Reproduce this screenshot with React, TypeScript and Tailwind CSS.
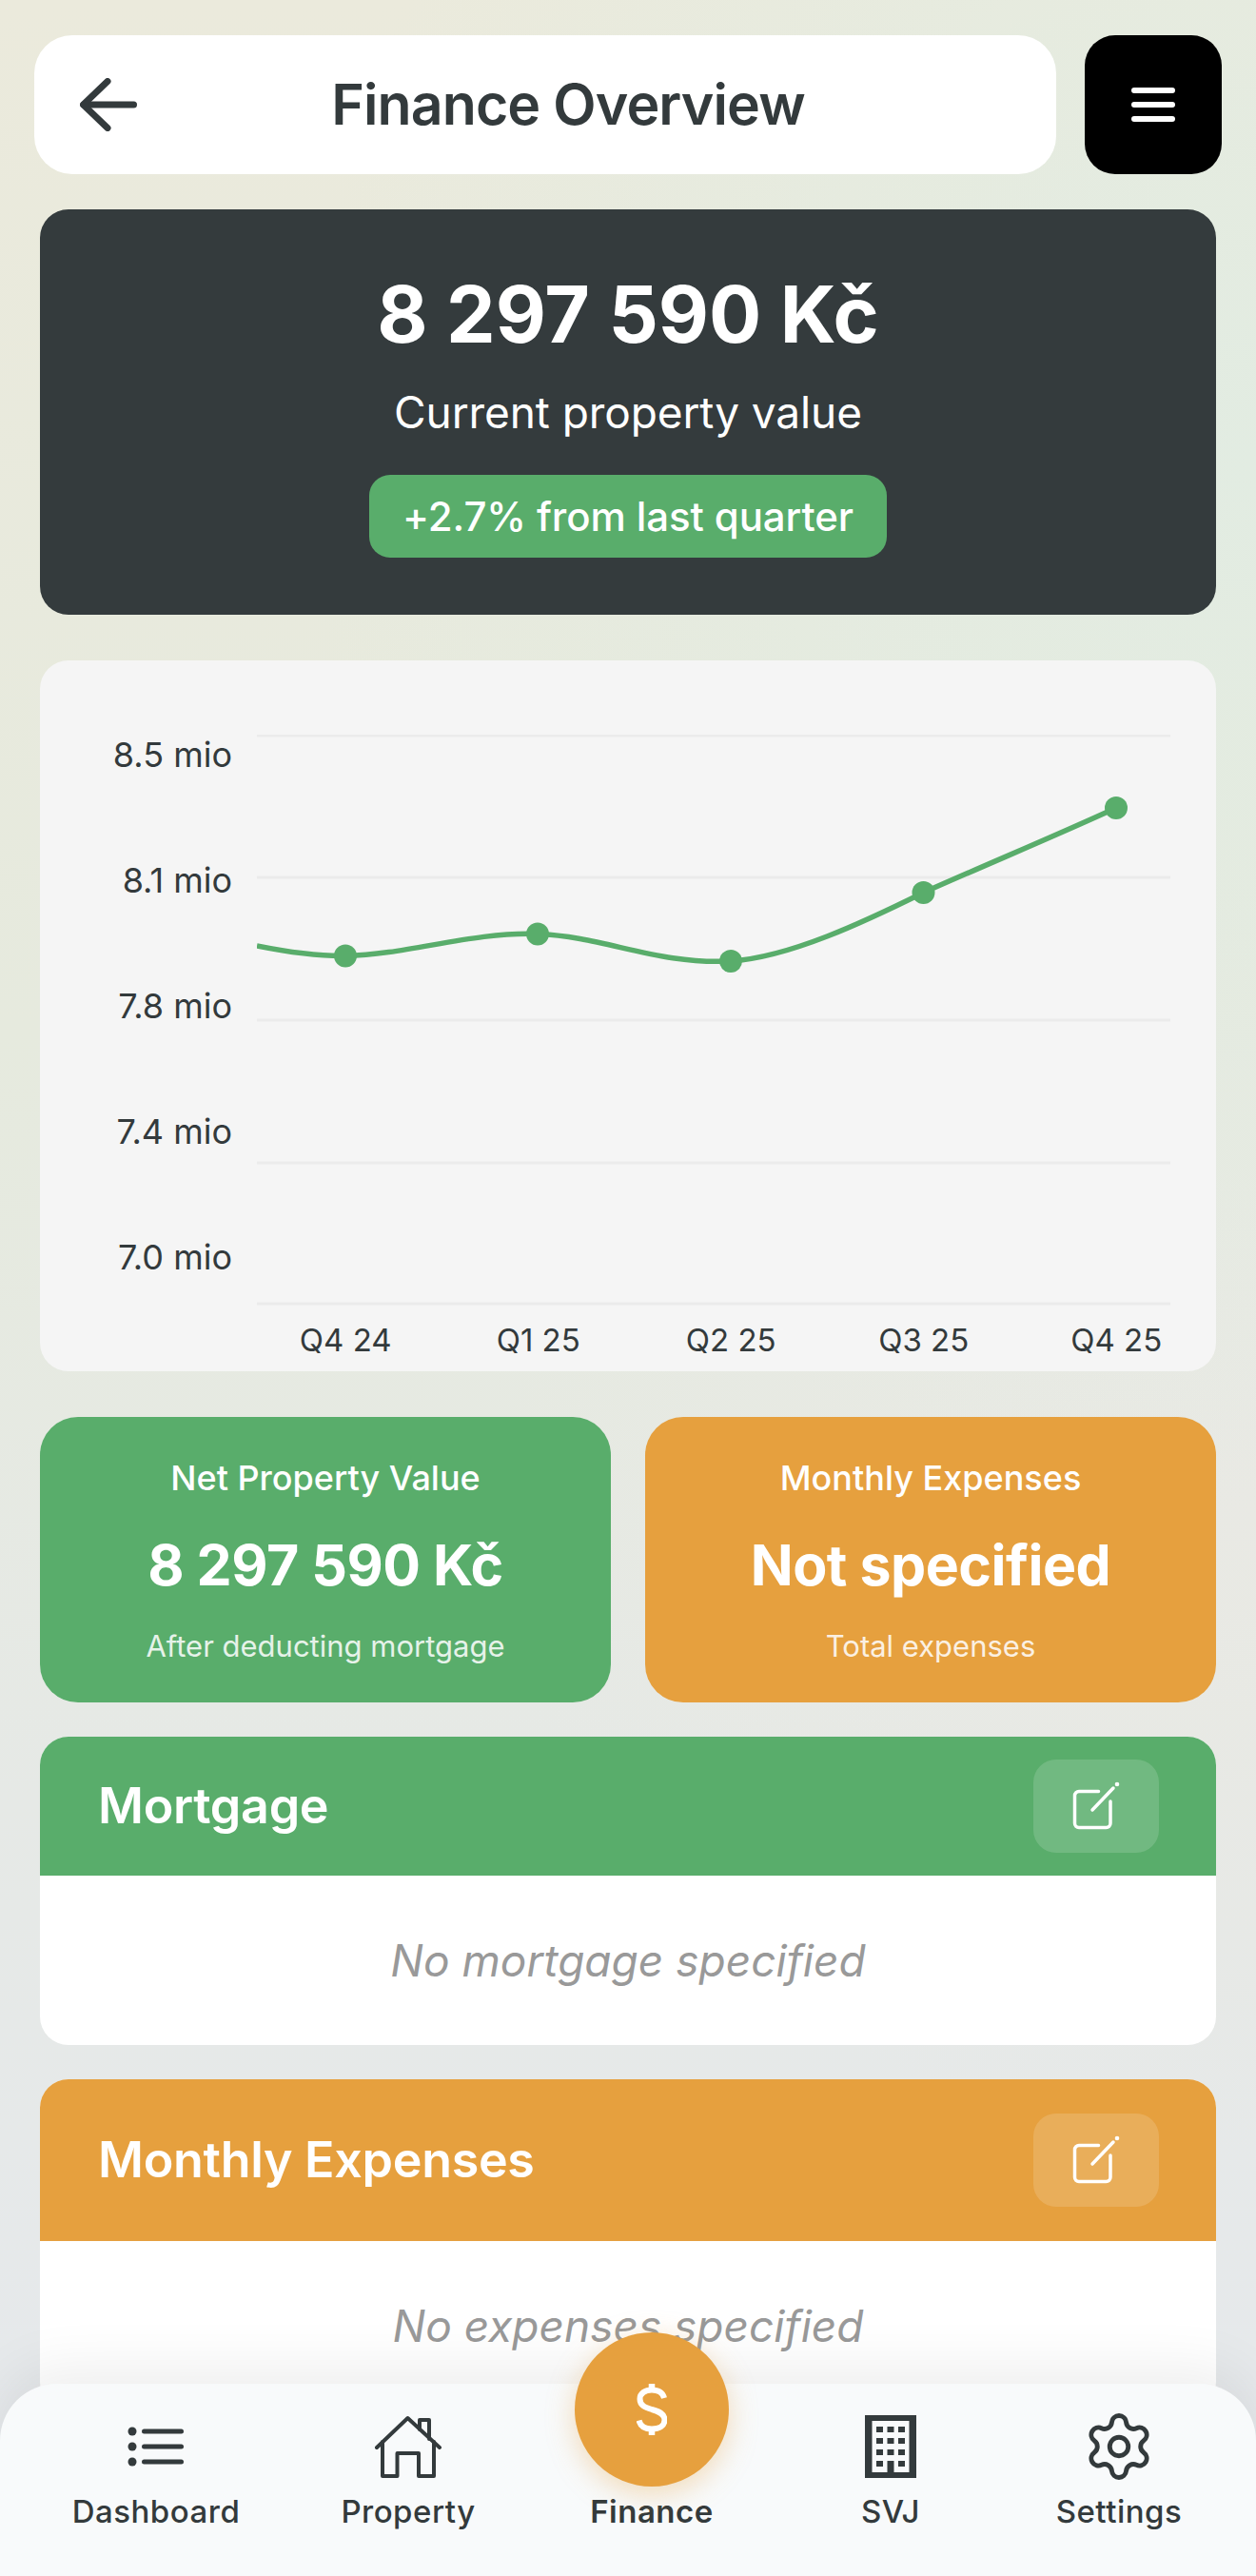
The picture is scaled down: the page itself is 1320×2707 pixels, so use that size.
import type { ReactNode } from 'react';
import { Settings } from 'lucide-react';

const yLabels = ['8.5 mio', '8.1 mio', '7.8 mio', '7.4 mio', '7.0 mio'];
const xLabels = ['Q4 24', 'Q1 25', 'Q2 25', 'Q3 25', 'Q4 25'];
const gridLines = [1, 150, 300, 450, 598];
const points = [
  [93, 232.5],
  [295, 209.5],
  [498, 238],
  [700.5, 166],
  [903, 77],
];

function ListIcon() {
  return (
    <svg width="60" height="42" viewBox="0 0 60 42" fill="#333a3c">
      <ellipse cx="5" cy="5" rx="4.5" ry="4.5" />
      <ellipse cx="5" cy="21" rx="4.5" ry="4.5" />
      <ellipse cx="5" cy="37" rx="4.5" ry="4.5" />
      <rect x="15" y="2.5" width="44" height="5" rx="2.5" />
      <rect x="15" y="18.5" width="44" height="5" rx="2.5" />
      <rect x="15" y="34.5" width="44" height="5" rx="2.5" />
    </svg>
  );
}

function HouseIcon() {
  return (
    <svg width="72" height="66" viewBox="0 0 72 66" fill="none" stroke="#333a3c" strokeWidth="4" strokeLinecap="round" strokeLinejoin="round">
      <path d="M3 34 35.5 3 69 34" />
      <path d="M9 28V64H24.5V40H47V64H63V28" />
      <path d="M48 15V5H58V25" />
    </svg>
  );
}

function BuildingIcon() {
  return (
    <svg width="54" height="66" viewBox="0 0 54 66" fill="#333a3c">
      <path fillRule="evenodd" d="M0 0H54V66H0ZM7.5 6V60H46.5V6Z" />
      {[12, 24, 36].map((y) =>
        [12, 23.5, 35].map((x) => <rect key={`${x}-${y}`} x={x} y={y} width="7" height="6" />),
      )}
      <rect x="12" y="48" width="7" height="6" />
      <rect x="23.5" y="48" width="7" height="12" />
      <rect x="35" y="48" width="7" height="6" />
    </svg>
  );
}

function DollarIcon() {
  return (
    <svg width="32" height="54" viewBox="0 0 32 54" fill="none" stroke="#fff" strokeWidth="6">
      <path d="M29 15C27.500 9 22.500 6.500 16 6.500 9 6.500 3.500 10 3.500 16 3.500 23 9.500 25 16 27 23.500 29 29.500 31.500 29.500 38 29.500 44 24 47.500 16 47.500 9 47.500 4 44.500 2.500 38.500" />
      <path d="M16 0V7M16 47V54" strokeWidth="6.500" />
    </svg>
  );
}

function EditIcon() {
  return (
    <svg width="50" height="52" viewBox="0 0 50 52" fill="none" stroke="#fff" strokeWidth="3.500" strokeLinecap="round">
      <path d="M27.500 10.500H7A4.500 4.500 0 0 0 2.500 15V44A4.500 4.500 0 0 0 7 48.500H35.500A4.500 4.500 0 0 0 40 44V21" />
      <path d="M21 30 43 7" />
      <circle cx="47" cy="3" r="2.300" fill="#fff" stroke="none" />
    </svg>
  );
}

function StatCard({ title, value, note, color }: { title: string; value: string; note: string; color: string }) {
  return (
    <div className={`flex h-[300px] flex-col items-center rounded-[40px] pt-[44px] text-white ${color}`}>
      <div className="text-[36px] leading-[40px] font-medium">{title}</div>
      <div className="mt-[37px] text-[59px] leading-[70px] font-bold tracking-[-0.5px]">{value}</div>
      <div className="mt-[32px] text-[31px] leading-[36px] opacity-85">{note}</div>
    </div>
  );
}

function Section({ title, empty, color, chip, headerHeight, bodyClass, children }: {
  title: string;
  empty: string;
  color: string;
  chip: string;
  headerHeight: string;
  bodyClass: string;
  children: ReactNode;
}) {
  return (
    <section className="overflow-hidden rounded-[30px] bg-white">
      <div className={`flex items-center justify-between pr-[60px] pl-[61px] ${color} ${headerHeight}`}>
        <h2 className="text-[52px] leading-[62px] font-semibold tracking-[-0.3px] text-white">{title}</h2>
        <button className={`flex h-[98px] w-[132px] items-center justify-center rounded-[24px] ${chip}`}>{children}</button>
      </div>
      <div className={`text-center text-[46px] text-[#999999] italic ${bodyClass}`}>{empty}</div>
    </section>
  );
}

const navItems = [
  { label: 'Dashboard', icon: <ListIcon /> },
  { label: 'Property', icon: <HouseIcon /> },
  { label: 'Finance', icon: <div className="h-[66px]" />, active: true },
  { label: 'SVJ', icon: <BuildingIcon /> },
  { label: 'Settings', icon: <Settings size={78} strokeWidth={1.5} color="#333a3c" className="-my-[6px]" /> },
];

export default function App() {
  return (
    <div className="relative h-[2707px] w-[1320px] overflow-hidden bg-[radial-gradient(1000px_1100px_at_100%_18%,#e2ece2_0%,transparent_100%),radial-gradient(800px_700px_at_100%_58%,#e9e9e4_0%,transparent_100%),linear-gradient(180deg,#ebeadc_0%,#e6eade_40%,#e6e9e6_70%,#e6e9ed_100%)] font-[Inter,sans-serif] text-[#333a3c]">
      <header className="flex gap-[30px] pt-[37px] pr-[36px] pl-[36px]">
        <div className="flex h-[146px] w-[1074px] items-center rounded-[40px] bg-white pl-[48px]">
          <svg width="60" height="56" viewBox="0 0 60 56" fill="none" stroke="#333a3c" strokeWidth="7" strokeLinecap="round" strokeLinejoin="round">
            <path d="M56.500 28H4" />
            <path d="M29 3.500 3.500 28 29 52.500" />
          </svg>
          <h1 className="flex-1 pr-[60px] text-center text-[59px] font-semibold tracking-[-0.9px]">Finance Overview</h1>
        </div>
        <button className="flex h-[146px] w-[144px] flex-col items-center justify-center gap-[9px] rounded-[32px] bg-black">
          <span className="h-[6px] w-[46px] rounded-full bg-white" />
          <span className="h-[6px] w-[46px] rounded-full bg-white" />
          <span className="h-[6px] w-[46px] rounded-full bg-white" />
        </button>
      </header>

      <main className="px-[42px]">
        <section className="mt-[37px] flex h-[426px] flex-col items-center rounded-[30px] bg-[#343b3d] pt-[61px] text-white">
          <div className="text-[82px] leading-[100px] font-bold">8 297 590 Kč</div>
          <div className="mt-[24px] text-[46px] leading-[56px] tracking-[-0.1px]">Current property value</div>
          <div className="mt-[38px] flex h-[87px] w-[544px] items-center justify-center rounded-[22px] bg-[#59ad6b] text-[42px] font-medium tracking-[-0.1px]">
            +2.7% from last quarter
          </div>
        </section>

        <section className="mt-[48px] h-[747px] rounded-[30px] bg-[#f5f5f5]">
          <div className="flex h-[694px] gap-[26px]">
            <div className="w-[202px] pt-[33px]">
              {yLabels.map((label) => (
                <div key={label} className="flex h-[132px] items-center justify-end text-[36px]">
                  {label}
                </div>
              ))}
            </div>
            <svg width="960" height="600" viewBox="0 0 960 600" fill="none" className="mt-[78px]">
              {gridLines.map((y) => (
                <line key={y} x1="0" x2="960" y1={y} y2={y} stroke="#ebebeb" strokeWidth="3" />
              ))}
              <path
                d="M0 222C35 229 65 233 93 232.500 160 231 225 207 295 209.500 365 212 420 242 498 238 560 234 640 196 700.500 166 770 135 840 106 903 77"
                stroke="#59ad6b"
                strokeWidth="5.500"
              />
              {points.map(([x, y]) => (
                <circle key={x} cx={x} cy={y} r="12" fill="#59ad6b" />
              ))}
            </svg>
          </div>
          <div className="mt-[2px] ml-[220px] flex h-[38px] items-center">
            {xLabels.map((label) => (
              <div key={label} className="w-[202.500px] text-center text-[33px]">
                {label}
              </div>
            ))}
          </div>
        </section>

        <div className="mt-[48px] grid grid-cols-2 gap-[36px]">
          <StatCard title="Net Property Value" value="8 297 590 Kč" note="After deducting mortgage" color="bg-[#59ad6b]" />
          <StatCard title="Monthly Expenses" value="Not specified" note="Total expenses" color="bg-[#e6a03e]" />
        </div>

        <div className="mt-[36px]">
          <Section title="Mortgage" empty="No mortgage specified" color="bg-[#59ad6b]" chip="bg-white/15" headerHeight="h-[146px]" bodyClass="py-[61px] leading-[56px]">
            <EditIcon />
          </Section>
        </div>
        <div className="mt-[36px]">
          <Section title="Monthly Expenses" empty="No expenses specified" color="bg-[#e6a03e]" chip="bg-white/15" headerHeight="h-[170px]" bodyClass="py-[61px] leading-[56px]">
            <EditIcon />
          </Section>
        </div>
      </main>

      <nav className="absolute right-0 bottom-0 left-0 h-[202px] rounded-t-[60px] bg-[#f8fafb] shadow-[0_-16px_60px_rgba(0,0,0,0.07)]">
        <div className="grid grid-cols-[328px_202px_310px_192px_288px] pt-[33px]">
          {navItems.map((item) => (
            <div key={item.label} className="flex flex-col items-center">
              <div className="flex h-[66px] items-center justify-center">{item.icon}</div>
              <div className={`mt-[15px] text-[33px] leading-[40px] tracking-[0.5px] ${item.active ? 'font-semibold' : 'font-medium'}`}>
                {item.label}
              </div>
            </div>
          ))}
        </div>
      </nav>
      <button className="absolute top-[2451px] left-[604px] flex h-[162px] w-[162px] items-center justify-center rounded-full bg-[#e6a03e] shadow-[0_8px_30px_rgba(230,160,62,0.35)]">
        <DollarIcon />
      </button>
    </div>
  );
}
